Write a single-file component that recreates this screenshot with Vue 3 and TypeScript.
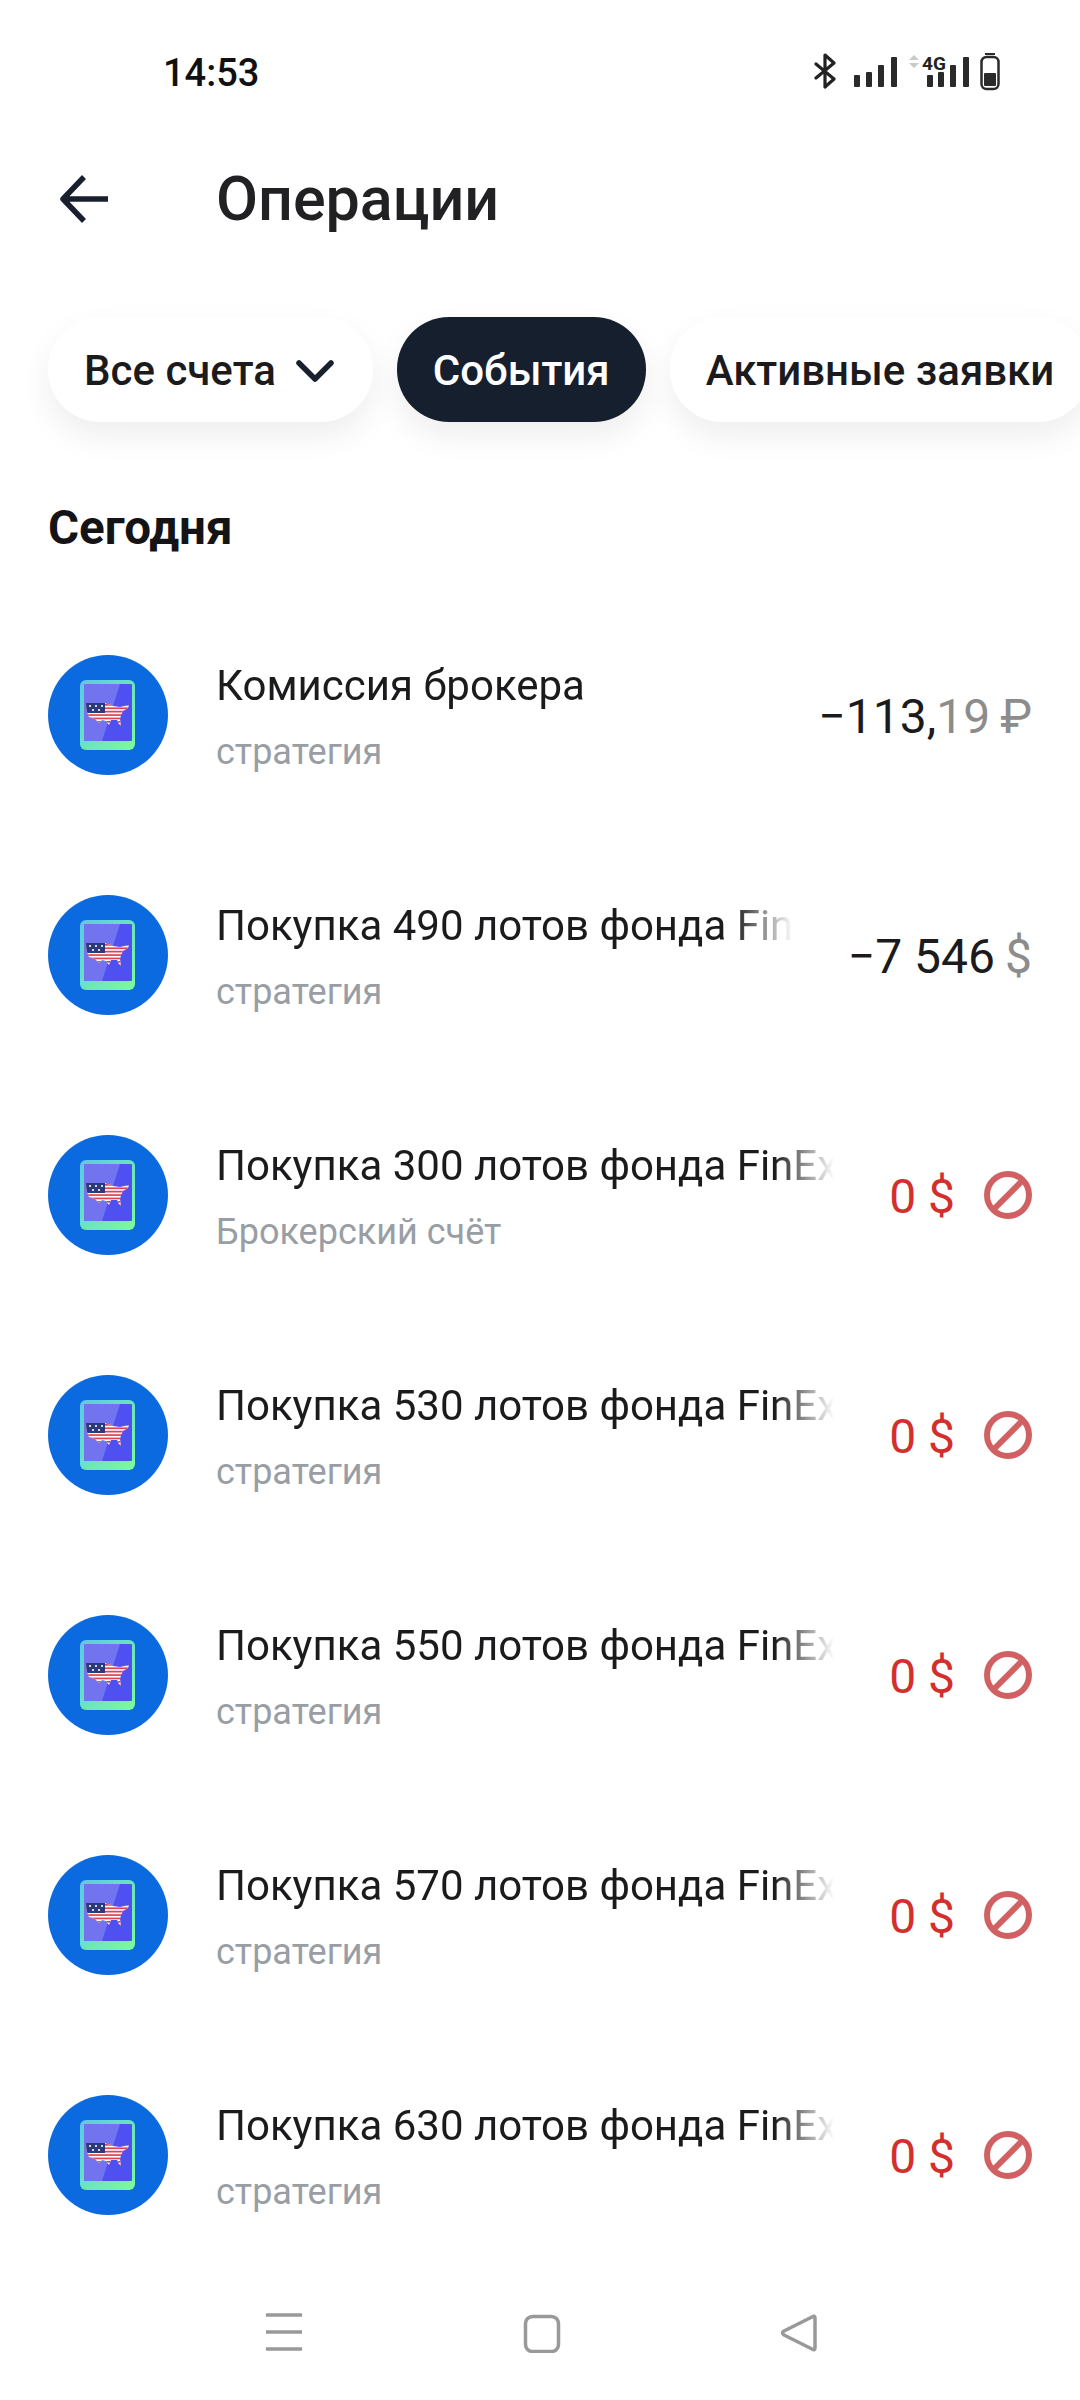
<script setup lang="ts">
interface Op {
  title: string
  sub: string
  main?: string
  minor?: string
  cur?: string
  rejected?: boolean
}

const ops: Op[] = [
  { title: 'Комиссия брокера', sub: 'стратегия', main: '−113,', minor: '19', cur: '₽' },
  { title: 'Покупка 490 лотов фонда FinEx USA Information Technology', sub: 'стратегия', main: '−7 546', cur: '$' },
  { title: 'Покупка 300 лотов фонда FinEx USA Information Technology', sub: 'Брокерский счёт', rejected: true },
  { title: 'Покупка 530 лотов фонда FinEx USA Information Technology', sub: 'стратегия', rejected: true },
  { title: 'Покупка 550 лотов фонда FinEx USA Information Technology', sub: 'стратегия', rejected: true },
  { title: 'Покупка 570 лотов фонда FinEx USA Information Technology', sub: 'стратегия', rejected: true },
  { title: 'Покупка 630 лотов фонда FinEx USA Information Technology', sub: 'стратегия', rejected: true },
]

const stripes = [0, 1, 2, 3, 4, 5, 6]
const usa = 'M0 0H19C22 2 24 1 27 3L34 4L43 2L42 5L37 8L35 12L34 16L35 23L33 21L31 17L25 17L23 22L20 18L16 17L13 20L9 16L3 14C1 10 0 5 0 0Z'
</script>

<template>
  <div class="page">
    <div class="status">
      <span class="time">14:53</span>
      <svg class="status-icons" width="200" height="40" viewBox="0 0 200 40" fill="none">
        <path d="M2 11L20 26L11 34V2L20 10L2 25" stroke="#222" stroke-width="3.2" stroke-linejoin="round" stroke-linecap="round" />
        <g fill="#2a2a2a">
          <rect x="40" y="22" width="6" height="12" rx="1" />
          <rect x="52" y="19" width="6" height="15" rx="1" />
          <rect x="64" y="12" width="6" height="22" rx="1" />
          <rect x="77" y="4" width="6" height="30" rx="1" />
          <rect x="113" y="22" width="6" height="12" rx="1" />
          <rect x="124" y="19" width="6" height="15" rx="1" />
          <rect x="136" y="12" width="6" height="22" rx="1" />
          <rect x="149" y="4" width="6" height="30" rx="1" />
        </g>
        <path d="M95 7L100 2L105 7ZM95 10H105L100 15Z" fill="#c9c9c9" />
        <text x="108" y="17" class="four-g">4G</text>
        <rect x="171" y="0" width="10" height="2" fill="#2a2a2a" />
        <rect x="167.5" y="4" width="17" height="32" rx="5" stroke="#2a2a2a" stroke-width="2.5" />
        <rect x="170" y="20" width="12" height="13" rx="1" fill="#2a2a2a" />
      </svg>
    </div>

    <header class="head">
      <svg class="back" width="48" height="48" viewBox="0 0 48 48" fill="none">
        <path d="M24 2L3 24L24 46M3 24H48" stroke="#18202f" stroke-width="5.5" stroke-linejoin="round" />
      </svg>
      <h1 class="heading">Операции</h1>
    </header>

    <div class="chips">
      <div class="chip">
        <span>Все счета</span>
        <svg class="chev" width="38" height="22" viewBox="0 0 38 22" fill="none">
          <path d="M3 3L19 19L35 3" stroke="#18202f" stroke-width="5.5" stroke-linecap="round" stroke-linejoin="round" />
        </svg>
      </div>
      <div class="chip dark">События</div>
      <div class="chip">Активные заявки</div>
    </div>

    <h2 class="day">Сегодня</h2>

    <ul class="list">
      <li v-for="(op, i) in ops" :key="i" class="row">
        <svg class="avatar" width="120" height="120" viewBox="0 0 120 120">
          <defs>
            <linearGradient :id="`edge${i}`" x1="0" y1="0" x2="1" y2="1">
              <stop offset="0" stop-color="#5cc8e6" />
              <stop offset="1" stop-color="#7dfb9c" />
            </linearGradient>
            <clipPath :id="`map${i}`"><path :d="usa" transform="translate(38 48)" /></clipPath>
          </defs>
          <circle cx="60" cy="60" r="60" fill="#0b6ae0" />
          <rect x="32" y="25" width="55" height="70" rx="6" :fill="`url(#edge${i})`" />
          <rect x="36" y="29" width="48" height="57" rx="1" fill="#4f50f2" />
          <path d="M36 29H72L54 86H36Z" fill="#7273ee" />
          <g :clip-path="`url(#map${i})`">
            <rect x="38" y="48" width="44" height="24" fill="#fff" />
            <rect v-for="s in stripes" :key="s" x="38" :y="49 + s * 3.4" width="44" height="1.7" fill="#e0434f" />
            <rect x="38" y="48" width="19" height="10" fill="#2d3a7a" />
            <circle cx="42" cy="51" r="1.1" fill="#fff" />
            <circle cx="48" cy="51" r="1.1" fill="#fff" />
            <circle cx="54" cy="51" r="1.1" fill="#fff" />
            <circle cx="45" cy="55" r="1.1" fill="#fff" />
            <circle cx="51" cy="55" r="1.1" fill="#fff" />
          </g>
        </svg>
        <div class="info">
          <div class="title">{{ op.title }}</div>
          <div class="sub">{{ op.sub }}</div>
        </div>
        <div v-if="op.rejected" class="rejected">
          <span class="zero">0&nbsp;$</span>
          <svg width="48" height="48" viewBox="0 0 48 48" fill="none">
            <circle cx="24" cy="24" r="21" stroke="#d06062" stroke-width="6" />
            <path d="M9 39L39 9" stroke="#d06062" stroke-width="6" />
          </svg>
        </div>
        <div v-else class="amount">
          {{ op.main }}<span class="muted">{{ op.minor }}<span class="cur">{{ op.cur }}</span></span>
        </div>
      </li>
    </ul>

    <nav class="nav">
      <svg width="552" height="41" viewBox="0 0 552 41" fill="none" stroke="#999" stroke-width="3.5" stroke-linejoin="round">
        <path d="M0 3H36M0 20H36M0 37H36" />
        <rect x="259.5" y="4.5" width="33" height="35" rx="7" />
        <path d="M549 6Q549 3 546 5L518 19Q515 21 518 23L546 37Q549 39 549 36Z" />
      </svg>
    </nav>
  </div>
</template>

<style scoped>
.page {
  width: 1080px;
  height: 2400px;
  overflow: hidden;
  background: #fff;
  display: flex;
  flex-direction: column;
  font-family: Roboto, "Liberation Sans", sans-serif;
  color: #1b1b1d;
}
.status {
  display: flex;
  align-items: center;
  justify-content: space-between;
  height: 40px;
  margin-top: 53px;
  padding: 0 66px 0 163px;
  flex: none;
}
.time {
  font-size: 38px;
  font-weight: 500;
  color: #111;
}
.four-g {
  font-family: Roboto, sans-serif;
  font-size: 19px;
  font-weight: 700;
  fill: #222;
}
.head {
  display: flex;
  align-items: center;
  gap: 108px;
  height: 60px;
  margin-top: 76px;
  padding-left: 60px;
  flex: none;
}
.back {
  flex: none;
}
.heading {
  margin: 0;
  font-size: 61px;
  font-weight: 500;
  line-height: 60px;
  color: #212124;
}
.chips {
  display: flex;
  gap: 24px;
  padding-left: 48px;
  margin-top: 88px;
  flex: none;
}
.chip {
  box-sizing: border-box;
  display: flex;
  align-items: center;
  gap: 20px;
  flex: none;
  height: 105px;
  padding: 2px 36px 0;
  border-radius: 52px;
  background: #fff;
  font-size: 42px;
  font-weight: 500;
  color: #1b1b1d;
  box-shadow: 0 14px 32px rgba(0, 0, 0, 0.07);
}
.chip.dark {
  background: #151f2d;
  color: #fff;
}
.chev {
  margin-right: 3px;
}
.day {
  margin: 76px 0 0;
  padding-left: 48px;
  font-size: 47.5px;
  font-weight: 700;
  line-height: 60px;
  color: #141416;
  flex: none;
}
.list {
  list-style: none;
  margin: 37px 0 0;
  padding: 0 48px;
  flex: none;
}
.row {
  display: flex;
  align-items: center;
  height: 240px;
}
.avatar {
  flex: none;
  margin-right: 48px;
}
.info {
  flex: 1;
  min-width: 0;
  margin: 6px 55px 0 0;
}
.title {
  font-size: 42px;
  line-height: 48px;
  white-space: nowrap;
  overflow: hidden;
  -webkit-mask-image: linear-gradient(to left, transparent, #000 60px);
  mask-image: linear-gradient(to left, transparent, #000 60px);
}
.sub {
  margin-top: 20px;
  font-size: 36px;
  line-height: 44px;
  color: #999ea4;
}
.amount {
  flex: none;
  padding-top: 3px;
  font-size: 48px;
  white-space: nowrap;
  color: #1b1b1d;
}
.muted {
  color: #8c8c8c;
}
.cur {
  margin-left: 10px;
}
.rejected {
  flex: none;
  display: flex;
  align-items: center;
  gap: 29px;
}
.zero {
  padding-top: 3px;
  font-size: 48px;
  color: #d32f2f;
}
.nav {
  margin-top: auto;
  padding: 0 0 47px 266px;
  flex: none;
}
.nav svg {
  display: block;
}
</style>
